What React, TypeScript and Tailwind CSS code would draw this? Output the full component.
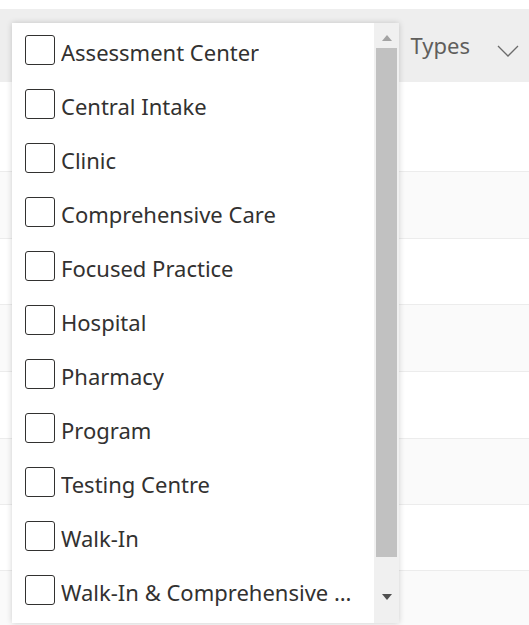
const OPTIONS = [
  'Assessment Center',
  'Central Intake',
  'Clinic',
  'Comprehensive Care',
  'Focused Practice',
  'Hospital',
  'Pharmacy',
  'Program',
  'Testing Centre',
  'Walk-In',
  'Walk-In & Comprehensive Care',
];

const ROWS = [
  { h: 'h-[90px]', bg: 'bg-white' },
  { h: 'h-[67px]', bg: 'bg-[#fafafa]' },
  { h: 'h-[66px]', bg: 'bg-white' },
  { h: 'h-[67px]', bg: 'bg-[#fafafa]' },
  { h: 'h-[67px]', bg: 'bg-white' },
  { h: 'h-[66px]', bg: 'bg-[#fafafa]' },
  { h: 'h-[66px]', bg: 'bg-white' },
  { h: 'h-[60px]', bg: 'bg-[#fafafa]' },
];

export default function App() {
  return (
    <div className="relative w-[529px] h-[625px] overflow-hidden bg-white font-['Noto_Sans',sans-serif]">
      {/* Table behind the dropdown */}
      <div className="h-[9px] bg-white" />
      <div className="h-[73px] bg-[#eeeeee] flex items-center justify-end pr-[10px]">
        <span className="text-[22px] leading-none text-[#605e5c] mr-[27px] -mt-[2px]">Types</span>
        <svg width="22" height="12" viewBox="0 0 22 12" className="mt-[10px]">
          <path d="M1 1 L11 11 L21 1" fill="none" stroke="#6b6b6b" strokeWidth="1.3" />
        </svg>
      </div>
      {ROWS.map((r, i) => (
        <div key={i} className={`${r.h} ${r.bg} border-b border-[#ececec]`} />
      ))}

      {/* Dropdown panel */}
      <div className="absolute left-[12px] top-[23px] w-[387px] h-[600px] bg-white flex shadow-[0_0_6px_rgba(0,0,0,0.18)]">
        <ul className="flex-1 min-w-0">
          {OPTIONS.map((o) => (
            <li key={o} className="h-[54px] flex items-center pl-[13px] pr-[16px]">
              <span className="w-[30px] h-[30px] shrink-0 rounded-[3px] border border-[#323130] bg-white" />
              <span className="ml-[6px] mt-[3px] text-[22px] leading-[30px] text-[#323130] truncate">{o}</span>
            </li>
          ))}
        </ul>
        {/* Scrollbar */}
        <div className="w-[25px] bg-[#f0f0f0] flex flex-col items-center">
          <div className="h-[25px] w-full flex items-center justify-center">
            <svg width="10" height="6" viewBox="0 0 10 6" className="mt-[4px]">
              <path d="M0 6 L5 0 L10 6 Z" fill="#a3a3a3" />
            </svg>
          </div>
          <div className="w-[21px] h-[509px] bg-[#c1c1c1]" />
          <div className="flex-1 w-full flex items-center justify-center">
            <svg width="10" height="6" viewBox="0 0 10 6" className="mt-[14px]">
              <path d="M0 0 L10 0 L5 6 Z" fill="#505050" />
            </svg>
          </div>
        </div>
      </div>
    </div>
  );
}
